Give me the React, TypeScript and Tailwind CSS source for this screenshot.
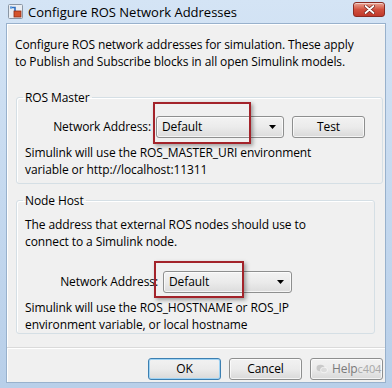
import { ReactNode } from "react";

function TitleIcon() {
  return (
    <svg width="15" height="15" viewBox="0 0 15 15" className="shrink-0">
      <rect x="0.5" y="0.5" width="14" height="14" rx="1" fill="#e9edf2" stroke="#8a96a4" />
      <path d="M2 3.5h5v5" stroke="#2f6fc0" strokeWidth="1.6" fill="none" />
      <rect x="6" y="7" width="7" height="6" fill="#d4532b" stroke="#8e2b14" strokeWidth="0.8" />
      <rect x="2" y="2.5" width="2" height="2" fill="#5a9be0" />
    </svg>
  );
}

function CloseButton() {
  return (
    <div className="flex h-[15px] w-[32px] items-center justify-center rounded-[3px] border border-[#8a2b22] bg-gradient-to-b from-[#e8a596] via-[#d2513f] to-[#c0392b] shadow-[inset_0_1px_0_rgba(255,255,255,0.5)]">
      <svg width="11" height="9" viewBox="0 0 11 9">
        <path d="M1.5 1l8 7M9.5 1l-8 7" stroke="#6b2019" strokeWidth="3.2" strokeLinecap="round" />
        <path d="M1.5 1l8 7M9.5 1l-8 7" stroke="#ffffff" strokeWidth="1.8" strokeLinecap="round" />
      </svg>
    </div>
  );
}

function Combo({ width }: { width: string }) {
  return (
    <div
      className={`flex h-[22px] ${width} items-center justify-between rounded-[3px] border border-[#8e8f8f] bg-gradient-to-b from-[#f3f3f3] via-[#ebebeb] to-[#dcdcdc] pl-[5px] pr-[7px] shadow-[inset_0_0_0_1px_rgba(255,255,255,0.7)]`}
    >
      <span>Default</span>
      <svg width="7" height="4" viewBox="0 0 7 4">
        <path d="M0 0h7L3.5 4z" fill="#000" />
      </svg>
    </div>
  );
}

function Button({ children, primary = false }: { children: ReactNode; primary?: boolean }) {
  return (
    <div
      className={`flex h-[22px] w-[73px] items-center justify-center overflow-hidden rounded-[3px] border bg-gradient-to-b from-[#f2f2f2] via-[#ebebeb] to-[#d9d9d9] ${
        primary
          ? "border-[#3c7fb1] shadow-[inset_0_0_0_1px_#9fd3f4]"
          : "border-[#8e8f8f] shadow-[inset_0_0_0_1px_rgba(255,255,255,0.7)]"
      }`}
    >
      {children}
    </div>
  );
}

function Group({ title, children, className = "" }: { title: string; children: ReactNode; className?: string }) {
  return (
    <fieldset className={`rounded-[3px] border border-[#d5dfe5] shadow-[inset_1px_1px_0_#fff] ${className}`}>
      <legend className="ml-[6px] px-[2px] leading-[17px]">{title}</legend>
      {children}
    </fieldset>
  );
}

export default function App() {
  return (
    <div className="relative flex h-[388px] w-[392px] flex-col overflow-hidden bg-gradient-to-b from-[#d4e4f5] via-[#c5d9ef] to-[#b8cfe9] font-['Open_Sans',sans-serif] text-[12px] tracking-[-0.1px] text-black">
      {/* title bar */}
      <div className="flex h-[23px] items-center pl-[8px] pr-[7px]">
        <TitleIcon />
        <span className="ml-[5px] mt-[2px] text-[13px] tracking-[0px]">Configure ROS Network Addresses</span>
        <div className="ml-auto -mt-[4px]">
          <CloseButton />
        </div>
      </div>

      {/* client */}
      <div className="mx-[6px] mb-[5px] flex flex-1 flex-col border border-[#98b1cc] bg-[#f0f0f0] shadow-[inset_1px_1px_0_#fff]">
        <p className="px-[8px] pt-[12px] leading-[17px]">
          Configure ROS network addresses for simulation. These apply
          <br />
          to Publish and Subscribe blocks in all open Simulink models.
        </p>

        <Group title="ROS Master" className="ml-[9px] mr-[2px] mt-[19px] pb-[5px]">
          <div className="mt-[10px] flex items-center">
            <span className="w-[134px] text-right">Network Address:</span>
            <div className="ml-[5px]">
              <Combo width="w-[128px]" />
            </div>
            <div className="ml-[8px]">
              <Button>Test</Button>
            </div>
          </div>
          <p className="mt-[6px] pl-[8px] leading-[17px]">
            Simulink will use the ROS_MASTER_URI environment
            <br />
            variable or http://localhost:11311
          </p>
        </Group>

        <Group title="Node Host" className="ml-[9px] mr-[10px] mt-[8px]">
          <p className="mt-[7px] pl-[8px] leading-[17px]">
            The address that external ROS nodes should use to
            <br />
            connect to a Simulink node.
          </p>
          <div className="mt-[21px] flex items-center">
            <span className="w-[141px] text-right">Network Address:</span>
            <div className="ml-[5px]">
              <Combo width="w-[129px]" />
            </div>
          </div>
          <p className="mt-[6px] pl-[8px] leading-[17px]">
            Simulink will use the ROS_HOSTNAME or ROS_IP
            <br />
            environment variable, or local hostname
          </p>
        </Group>

        <div className="mt-[13px] border-t border-[#dadada] shadow-[0_1px_0_#fff]" />

        <div className="mt-[10px] flex justify-end gap-[8px] pr-[2px]">
          <Button primary>OK</Button>
          <Button>Cancel</Button>
          <Button>
            <div className="flex w-full items-center pl-[5px]">
              <svg width="12" height="10" viewBox="0 0 12 10" className="shrink-0">
                <ellipse cx="4.5" cy="4" rx="4" ry="3.3" fill="#c9c9c9" />
                <ellipse cx="8" cy="6" rx="3.5" ry="2.8" fill="#dcdcdc" stroke="#fff" strokeWidth="0.6" />
              </svg>
              <span className="ml-[4px] text-[#7a7a7a]">Help</span>
              <span className="text-[11px] text-[#a8a8a8]">c404</span>
            </div>
          </Button>
        </div>
      </div>

      {/* red annotation boxes */}
      <div className="pointer-events-none absolute left-[153px] top-[102px] h-[42px] w-[98px] border-2 border-[#a3232a] shadow-[2px_2px_4px_rgba(0,0,0,0.35)]" />
      <div className="pointer-events-none absolute left-[154px] top-[261px] h-[37px] w-[90px] border-2 border-[#a3232a] shadow-[2px_2px_4px_rgba(0,0,0,0.35)]" />
    </div>
  );
}
